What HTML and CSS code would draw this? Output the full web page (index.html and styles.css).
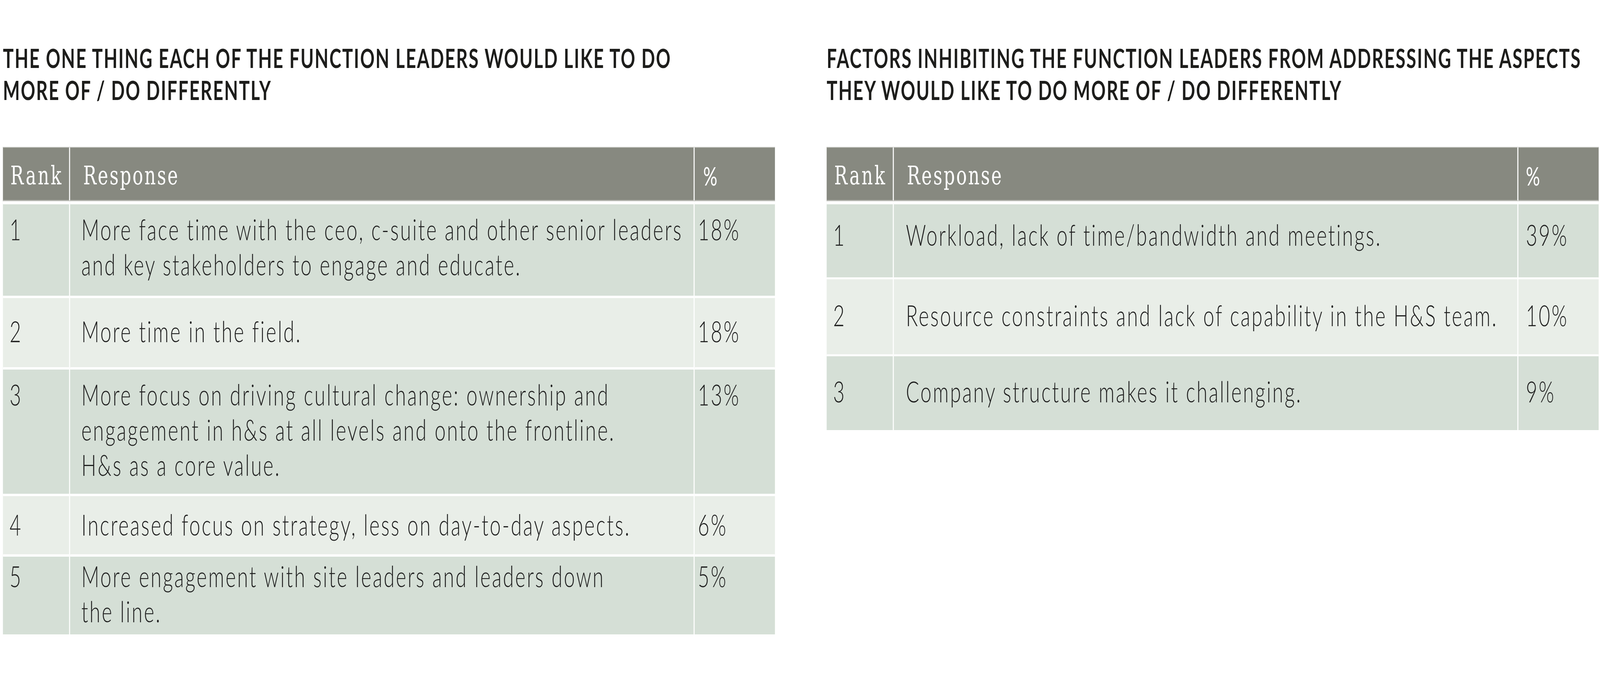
FILE: index.html
```html
<!DOCTYPE html>
<html lang="en">
<head>
<meta charset="utf-8">
<title>Function leaders survey</title>
<link rel="stylesheet" href="styles.css">
</head>
<body>
<main class="page">
  <section class="panel">
    <h2 class="title">THE ONE THING EACH OF THE FUNCTION LEADERS WOULD LIKE TO DO<br>MORE OF / DO DIFFERENTLY</h2>
    <table class="rank-table">
      <colgroup><col class="c-rank"><col class="c-resp"><col class="c-pct"></colgroup>
      <thead>
        <tr><th class="rank">Rank</th><th class="resp">Response</th><th class="pct">%</th></tr>
      </thead>
      <tbody>
        <tr class="dark l1"><td class="rank">1</td><td class="resp">More face time with the ceo, c-suite and other senior leaders<br>and key stakeholders to engage and educate.</td><td class="pct">18%</td></tr>
        <tr class="light l2"><td class="rank">2</td><td class="resp">More time in the field.</td><td class="pct">18%</td></tr>
        <tr class="dark l3"><td class="rank">3</td><td class="resp">More focus on driving cultural change: ownership and<br>engagement in h&amp;s at all levels and onto the frontline.<br>H&amp;s as a core value.</td><td class="pct">13%</td></tr>
        <tr class="light l4"><td class="rank">4</td><td class="resp">Increased focus on strategy, less on day-to-day aspects.</td><td class="pct">6%</td></tr>
        <tr class="dark l5"><td class="rank">5</td><td class="resp">More engagement with site leaders and leaders down<br>the line.</td><td class="pct">5%</td></tr>
      </tbody>
    </table>
  </section>
  <section class="panel">
    <h2 class="title">FACTORS INHIBITING THE FUNCTION LEADERS FROM ADDRESSING THE ASPECTS<br>THEY WOULD LIKE TO DO MORE OF / DO DIFFERENTLY</h2>
    <table class="rank-table right">
      <colgroup><col class="c-rank"><col class="c-resp"><col class="c-pct"></colgroup>
      <thead>
        <tr><th class="rank">Rank</th><th class="resp">Response</th><th class="pct">%</th></tr>
      </thead>
      <tbody>
        <tr class="dark r1"><td class="rank">1</td><td class="resp">Workload, lack of time/bandwidth and meetings.</td><td class="pct">39%</td></tr>
        <tr class="light r2"><td class="rank">2</td><td class="resp">Resource constraints and lack of capability in the H&amp;S team.</td><td class="pct">10%</td></tr>
        <tr class="dark r3"><td class="rank">3</td><td class="resp">Company structure makes it challenging.</td><td class="pct">9%</td></tr>
      </tbody>
    </table>
  </section>
</main>
</body>
</html>
```

FILE: styles.css
```css
* { box-sizing: border-box; }

html, body {
  margin: 0;
  padding: 0;
  background: #ffffff;
}

body {
  height: 1751px;
  overflow: hidden;
  font-family: "Lato", "Liberation Sans", sans-serif;
  color: #1f1f1f;
}

.page {
  width: 6000px;
  display: grid;
  grid-template-columns: 2895px 2895px;
  column-gap: 194px;
  padding-left: 11px;
  transform-origin: 0 0;
}

/* the 6000px-wide design is squeezed into narrower windows */
@media (max-width: 5999px) {
  .page { transform: scaleX(0.682667); }
}

.title {
  margin: 107px 0 0 0;
  font-family: "Lato", "Liberation Sans", sans-serif;
  font-weight: 700;
  font-size: 67px;
  line-height: 82px;
  letter-spacing: 3.6px;
  color: #1d1d1b;
}

.rank-table {
  margin-top: 105px;
  width: 2895px;
  table-layout: fixed;
  border-collapse: separate;
  border-spacing: 0;
}

.c-rank { width: 252px; }
.c-resp { width: 2342px; }
.c-pct { width: 301px; }

.rank-table th {
  background: #878980;
  color: #ffffff;
  text-align: left;
  font-weight: 400;
  font-family: "DejaVu Serif", "Liberation Serif", serif;
  font-size: 66px;
  line-height: 80px;
  letter-spacing: 5px;
  padding: 32px 0 22px 0;
  border-top: 2px solid #c6c7c2;
  border-bottom: 3px solid #b9bab4;
}

.rank-table th.rank { padding-left: 28px; letter-spacing: 6px; }
.rank-table th.resp { padding-left: 49px; }
.rank-table th.pct {
  padding-left: 32px;
  font-family: "Lato", "Liberation Sans", sans-serif;
  font-weight: 400;
  letter-spacing: 0;
}
.rank-table.right th.pct { padding-left: 28px; }

.rank-table th.rank,
.rank-table th.resp,
.rank-table td.rank,
.rank-table td.resp {
  border-right: 4px solid #ffffff;
}

.rank-table td {
  vertical-align: top;
  font-weight: 300;
  font-size: 74px;
  line-height: 90px;
  letter-spacing: 5.2px;
  white-space: nowrap;
  border-top: 6px solid #ffffff;
}

.rank-table tbody tr:first-child td { border-top-width: 8px; }

.rank-table td.rank { padding-left: 25px; }
.rank-table td.resp { padding-left: 42px; }
.rank-table td.pct { padding-left: 12px; }
.rank-table.right td.rank { padding-left: 24px; }
.rank-table.right td.resp { padding-left: 45px; }
.rank-table.right td.pct { padding-left: 28px; }

.dark td { background: #d5dfd6; }
.light td { background: #e9eee8; }

/* row spacing of the left table */
.l1 td { padding-top: 19px; padding-bottom: 35px; }
.l2 td { padding-top: 40px; padding-bottom: 47px; }
.l3 td { padding-top: 19px; padding-bottom: 29px; }
.l4 td { padding-top: 28px; padding-bottom: 31px; }
.l5 td { padding-top: 5px; padding-bottom: 14px; }

/* row spacing of the right table */
.r1 td { padding-top: 33px; padding-bottom: 64px; border-top-width: 9px; }
.r2 td { padding-top: 47px; padding-bottom: 55px; border-top-width: 5px; }
.r3 td { padding-top: 45px; padding-bottom: 54px; border-top-width: 5px; }
```
